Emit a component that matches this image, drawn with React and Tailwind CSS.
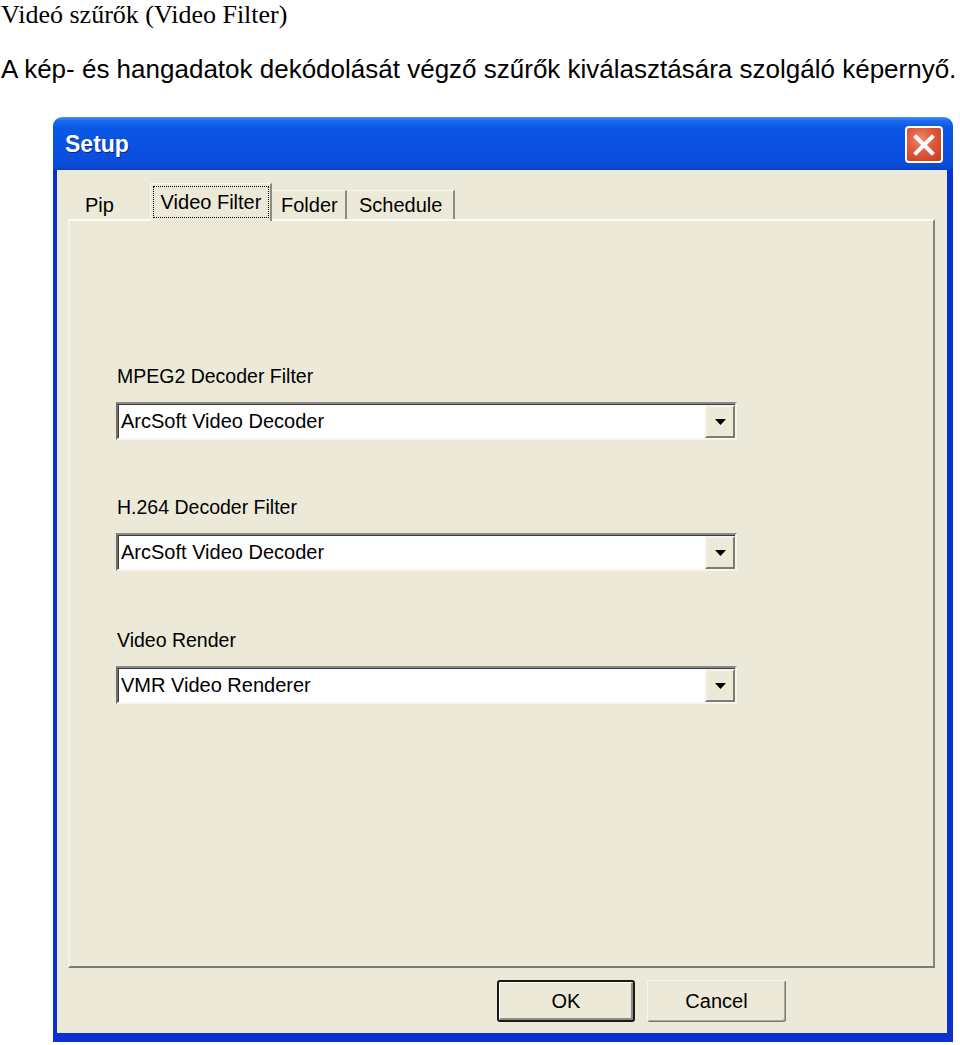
import React from "react";

const ui = { fontFamily: '"Liberation Sans", Arial, sans-serif' };

function Combo({ value }) {
  return (
    <div className="flex h-[38px] w-[621px] border-2 border-t-[#8a8a86] border-l-[#6f6f6c] border-b-[#f6f5f0] border-r-[#f6f5f0] bg-white shadow-[inset_1px_1px_0_#3c3c3c]">
      <div className="flex flex-1 items-center pl-[3px] text-[20px] leading-[24px] text-black">
        {value}
      </div>
      <div className="mt-[1px] mr-0 flex h-[33px] w-[30px] items-center justify-center border-2 border-t-[#f4f2ea] border-l-[#f4f2ea] border-b-[#7d7b72] border-r-[#7d7b72] bg-[#ece9d8]">
        <svg width="11" height="6" viewBox="0 0 11 6">
          <path d="M0 0 H11 L5.5 6 Z" fill="#000" />
        </svg>
      </div>
    </div>
  );
}

function Field({ label, value, className = "" }) {
  return (
    <div className={"flex flex-col " + className}>
      <div className="ml-[1px] h-[24px] text-[19.5px] leading-[24px] text-black">{label}</div>
      <div className="mt-[14px]">
        <Combo value={value} />
      </div>
    </div>
  );
}

export default function App() {
  return (
    <div className="min-h-[1045px] w-[960px] overflow-hidden bg-white">
      <div
        className="pt-[1px] pl-[1px] text-[26px] leading-[28px] text-black"
        style={{ fontFamily: '"Liberation Serif", "Times New Roman", serif' }}
      >
        Videó szűrők (Video Filter)
      </div>
      <div
        className="mt-[25px] whitespace-nowrap pl-[1px] text-[26px] leading-[30px] text-black"
        style={ui}
      >
        A kép- és hangadatok dekódolását végző szűrők kiválasztására szolgáló képernyő.
      </div>

      <div className="mt-[33px] pl-[53px]" style={ui}>
        <div className="flex h-[925px] w-[900px] flex-col">
          {/* Title bar */}
          <div className="flex h-[53px] items-start justify-between rounded-t-[9px] bg-[linear-gradient(to_bottom,#4a94f8_0%,#1f6ef0_6%,#0b58e6_20%,#0a50e0_60%,#0a4cda_90%,#0842c4_100%)] pl-[12px] pr-[10px]">
            <div className="mt-[14px] text-[23px] font-bold leading-[26px] text-white [text-shadow:1px_1px_0_#0a2a8a]">
              Setup
            </div>
            <div className="mt-[9px] flex h-[37px] w-[38px] items-center justify-center rounded-[4px] border-2 border-white bg-[radial-gradient(circle_at_40%_35%,#f08a68_0%,#e0593a_45%,#c23a1c_100%)]">
              <svg width="22" height="22" viewBox="0 0 22 22">
                <path d="M3 3 L19 19 M19 3 L3 19" stroke="#fff" strokeWidth="4" strokeLinecap="square" />
              </svg>
            </div>
          </div>

          {/* Client area */}
          <div className="flex flex-1 flex-col border-x-[4px] border-b-[9px] border-l-[#0a32d0] border-r-[#0a32d0] border-b-[#0a32d0] bg-[#ece9d8] pt-[13px] pl-[11px] pr-[12px] [border-right-width:6px]">
            {/* Tabs */}
            <div className="relative z-10 flex h-[36px] items-end pl-[2px]">
              <div className="flex h-[29px] w-[80px] items-center pl-[15px] text-[20px] leading-[24px] text-black">
                Pip
              </div>
              <div className="-mb-[2px] flex h-[38px] w-[122px] items-start border-l border-t border-r-2 border-l-[#f8f7f2] border-t-[#f8f7f2] border-r-[#8d8a80] bg-[#ece9d8] pt-[2px] pl-[2px]">
                <div className="flex h-[32px] w-[116px] items-center justify-center border border-dotted border-black text-[20px] leading-[24px] text-black">
                  Video Filter
                </div>
              </div>
              <div className="flex h-[29px] w-[75px] items-center border-t border-r-2 border-t-[#f8f7f2] border-r-[#8d8a80] pl-[9px] text-[20px] leading-[24px] text-black">
                Folder
              </div>
              <div className="flex h-[29px] w-[108px] items-center border-t border-r-2 border-t-[#f8f7f2] border-r-[#8d8a80] pl-[12px] text-[20px] leading-[24px] text-black">
                Schedule
              </div>
            </div>

            {/* Tab panel */}
            <div className="flex h-[749px] flex-col border-2 border-t-[#fbfaf6] border-l-[#f4f2ea] border-r-[#86847c] border-b-[#7c7a72] bg-[#ece9d8] pt-[143px] pl-[46px]">
              <Field label="MPEG2 Decoder Filter" value="ArcSoft Video Decoder" />
              <Field className="mt-[55px]" label="H.264 Decoder Filter" value="ArcSoft Video Decoder" />
              <Field className="mt-[57px]" label="Video Render" value="VMR Video Renderer" />
            </div>

            {/* Buttons */}
            <div className="mt-[12px] flex gap-[12px] pl-[429px]">
              <div className="flex h-[42px] w-[138px] items-center justify-center rounded-[3px] border-2 border-[#1a1a1a] bg-[#ece9d8] shadow-[inset_1px_1px_0_#fbfaf5,inset_-2px_-2px_0_#8e8b80] text-[20px] leading-[24px] text-black">
                OK
              </div>
              <div className="flex h-[42px] w-[139px] items-center justify-center rounded-[3px] border border-[#f7f6f0] border-b-[#7a786f] border-r-[#7a786f] bg-[#ece9d8] shadow-[inset_-1px_-1px_0_#a9a699] text-[20px] leading-[24px] text-black">
                Cancel
              </div>
            </div>
          </div>
        </div>
      </div>
    </div>
  );
}
